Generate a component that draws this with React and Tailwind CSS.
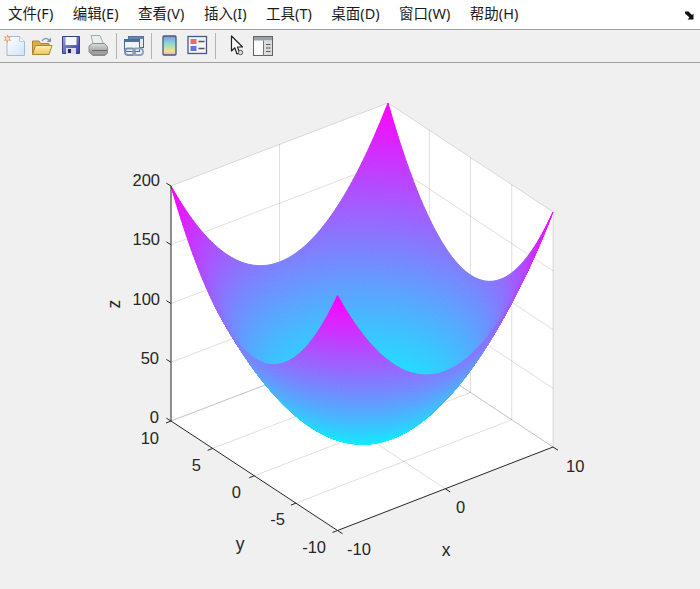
import React from 'react';

const MENUS = ['文件(F)', '编辑(E)', '查看(V)', '插入(I)', '工具(T)', '桌面(D)', '窗口(W)', '帮助(H)'];

// base corners of the axes box on screen, u runs along x, v along y
const A = [171, 421]; // x=-10 y=10
const B = [337.5, 530.5]; // x=-10 y=-10
const C = [553, 447]; // x=10 y=-10
const D = [388, 338]; // x=10 y=10
const Z_SCALE = 235 / 200;

const project = (x, y, z = 0) => {
  const u = (x + 10) / 20;
  const v = (y + 10) / 20;
  const px = (1 - u) * (1 - v) * B[0] + u * (1 - v) * C[0] + u * v * D[0] + (1 - u) * v * A[0];
  const py = (1 - u) * (1 - v) * B[1] + u * (1 - v) * C[1] + u * v * D[1] + (1 - u) * v * A[1];
  return [px, py - z * Z_SCALE];
};

const pts = (list) => list.map((p) => `${p[0].toFixed(2)},${p[1].toFixed(2)}`).join(' ');

// z = x^2 + y^2 drawn from the far corner to the near one
const buildSurface = (n) => {
  const faces = [];
  const step = 20 / n;
  for (let i = n - 1; i >= 0; i--) {
    for (let j = n - 1; j >= 0; j--) {
      const x0 = -10 + i * step;
      const y0 = -10 + j * step;
      const x1 = x0 + step;
      const y1 = y0 + step;
      const f = (x, y) => project(x, y, x * x + y * y);
      const xm = (x0 + x1) / 2;
      const ym = (y0 + y1) / 2;
      const t = Math.min(1, (xm * xm + ym * ym) / 200);
      const color = `rgb(${Math.round(t * 255)},${Math.round((1 - t) * 255)},255)`;
      faces.push({ key: `${i}-${j}`, points: pts([f(x0, y0), f(x1, y0), f(x1, y1), f(x0, y1)]), color });
    }
  }
  return faces;
};

const Seg = ({ a, b, className }) => (
  <line x1={a[0]} y1={a[1]} x2={b[0]} y2={b[1]} className={className} />
);

const GRID = 'stroke-[#262626] [stroke-opacity:0.15] [stroke-width:1]';
const AXIS = 'stroke-[#262626] [stroke-width:1]';

const Label = ({ x, y, anchor = 'middle', big = false, children }) => (
  <text
    x={x}
    y={y}
    textAnchor={anchor}
    dominantBaseline="central"
    className={`fill-[#262626] [font-family:'Liberation_Sans',Arial,sans-serif] ${big ? 'text-[17.5px]' : 'text-[16.5px]'}`}
  >
    {children}
  </text>
);

const Plot = () => {
  const faces = buildSurface(100);
  const zs = [50, 100, 150, 200];
  return (
    <svg viewBox="0 63 700 526" className="block w-[700px] h-[526px]">
      <polygon
        points={pts([project(-10, 10, 200), project(10, 10, 200), project(10, -10, 200), project(10, -10), project(-10, -10), project(-10, 10)])}
        className="fill-white"
      />

      {/* walls and floor grid */}
      {zs.map((z) => (
        <g key={z}>
          <Seg a={project(-10, 10, z)} b={project(10, 10, z)} className={GRID} />
          <Seg a={project(10, 10, z)} b={project(10, -10, z)} className={GRID} />
        </g>
      ))}
      <Seg a={project(0, 10, 0)} b={project(0, 10, 200)} className={GRID} />
      <Seg a={project(10, 10, 0)} b={project(10, 10, 200)} className={GRID} />
      <Seg a={project(10, -10, 0)} b={project(10, -10, 200)} className={GRID} />
      {[5, 0, -5].map((y) => (
        <g key={y}>
          <Seg a={project(10, y, 0)} b={project(10, y, 200)} className={GRID} />
          <Seg a={project(-10, y, 0)} b={project(10, y, 0)} className={GRID} />
        </g>
      ))}
      <Seg a={project(0, 10, 0)} b={project(0, -10, 0)} className={GRID} />
      <Seg a={project(-10, 10, 0)} b={project(10, 10, 0)} className={GRID} />
      <Seg a={project(10, 10, 0)} b={project(10, -10, 0)} className={GRID} />
      <Seg a={project(-10, 10, 0)} b={project(10, 10, 0)} className={GRID} />
      <Seg a={project(10, 10, 0)} b={project(10, -10, 0)} className={GRID} />

      {/* surface */}
      {faces.map((f) => (
        <polygon key={f.key} points={f.points} fill={f.color} stroke={f.color} strokeWidth="1" strokeLinejoin="round" />
      ))}

      {/* axes and ticks */}
      <Seg a={project(-10, 10, 0)} b={project(-10, 10, 200)} className={AXIS} />
      <Seg a={project(-10, 10, 0)} b={project(-10, -10, 0)} className={AXIS} />
      <Seg a={project(-10, -10, 0)} b={project(10, -10, 0)} className={AXIS} />
      {[0, 50, 100, 150, 200].map((z) => {
        const p = project(-10, 10, z);
        return <Seg key={z} a={p} b={[p[0] - 4.6, p[1] - 2.8]} className={AXIS} />;
      })}
      {[10, 5, 0, -5, -10].map((y) => {
        const p = project(-10, y, 0);
        return <Seg key={y} a={p} b={[p[0] - 5, p[1] + 2]} className={AXIS} />;
      })}
      {[-10, 0, 10].map((x) => {
        const p = project(x, -10, 0);
        return <Seg key={x} a={p} b={[p[0] + 5, p[1] + 3.2]} className={AXIS} />;
      })}

      <Label x={160} y={180} anchor="end">200</Label>
      <Label x={160} y={239} anchor="end">150</Label>
      <Label x={160} y={299} anchor="end">100</Label>
      <Label x={159} y={358} anchor="end">50</Label>
      <Label x={159} y={417} anchor="end">0</Label>
      <Label x={159} y={438} anchor="end">10</Label>
      <Label x={201} y={465} anchor="end">5</Label>
      <Label x={241} y={492} anchor="end">0</Label>
      <Label x={285} y={519} anchor="end">-5</Label>
      <Label x={326} y={547} anchor="end">-10</Label>
      <Label x={347} y={549} anchor="start">-10</Label>
      <Label x={456} y={507} anchor="start">0</Label>
      <Label x={566} y={466} anchor="start">10</Label>
      <Label x={446} y={550} big>x</Label>
      <Label x={240} y={544} big>y</Label>
      <g transform="rotate(-90 115 304)">
        <Label x={115} y={303} big>z</Label>
      </g>
    </svg>
  );
};

const NewIcon = () => (
  <svg viewBox="0 0 24 24" className="w-6 h-6">
    <defs>
      <linearGradient id="pg" x1="0" y1="0" x2="1" y2="1">
        <stop offset="0" stopColor="#ffffff" />
        <stop offset="1" stopColor="#cfe3f7" />
      </linearGradient>
    </defs>
    <path d="M4 2.500H16.500L21.500 7.500V21.500H4Z" fill="url(#pg)" stroke="#a5bad3" />
    <path d="M16.500 2.500V7.500H21.500" fill="#eef5fc" stroke="#b9cade" />
    <path d="M4.500 0l1 3 3-1-2 2.500 2 2.500-3-.8-1 3-1-3-3 .8 2-2.500-2-2.500 3 1z" fill="#ee9a63" />
    <circle cx="4.500" cy="4.500" r="1.700" fill="#fcdcae" />
  </svg>
);

const OpenIcon = () => (
  <svg viewBox="0 0 24 24" className="w-6 h-6">
    <defs>
      <linearGradient id="fg" x1="0" y1="0" x2="0" y2="1">
        <stop offset="0" stopColor="#fff3b4" />
        <stop offset="1" stopColor="#ecc35c" />
      </linearGradient>
    </defs>
    <path d="M1.500 7V20.500H18V9.500H9.500L8 7Z" fill="#dcae48" stroke="#ab8532" />
    <path d="M1.500 20.500L4.500 11.500H21L18 20.500Z" fill="url(#fg)" stroke="#ab8532" />
    <path d="M11 7C12.500 4 16 3.500 18 6" fill="none" stroke="#8ea2b5" strokeWidth="1.500" />
    <path d="M20 3.500V8H15.500Z" fill="#8095a9" />
  </svg>
);

const SaveIcon = () => (
  <svg viewBox="0 0 24 24" className="w-6 h-6">
    <defs>
      <linearGradient id="sg" x1="0" y1="0" x2="1" y2="1">
        <stop offset="0" stopColor="#9aa0e6" />
        <stop offset="1" stopColor="#353b9c" />
      </linearGradient>
    </defs>
    <path d="M3.500 2.500H20.500V19.500H3.500Z" fill="url(#sg)" stroke="#3a3e84" />
    <rect x="6.500" y="3" width="11" height="8" fill="#f6f7fc" />
    <rect x="7" y="14" width="10" height="6" fill="#d9dbe9" />
    <rect x="9" y="15" width="3" height="4" fill="#23264f" />
  </svg>
);

const PrintIcon = () => (
  <svg viewBox="0 0 24 24" className="w-6 h-6">
    <defs>
      <linearGradient id="prg" x1="0" y1="0" x2="0" y2="1">
        <stop offset="0" stopColor="#dcdcdc" />
        <stop offset="1" stopColor="#858585" />
      </linearGradient>
    </defs>
    <path d="M6 10L4 1.500H13L16.500 10Z" fill="#e9eef1" stroke="#a3aaaf" />
    <path d="M2 12L5.500 9.500H17.500L20.500 13V19L18 21.500H6L2 18Z" fill="url(#prg)" stroke="#8b8d8f" />
    <path d="M5 16.500H20" stroke="#666" />
    <path d="M6 19.500H18" stroke="#a8a8a8" />
  </svg>
);

const LinkIcon = () => (
  <svg viewBox="0 0 24 24" className="w-6 h-6">
    <rect x="6.500" y="2.500" width="15" height="11" fill="#e3eaf2" stroke="#4a6589" />
    <rect x="6.500" y="2.500" width="15" height="2.500" fill="#6485ac" />
    <rect x="2.500" y="5.500" width="15" height="12" fill="#f0f3f8" stroke="#4a6589" />
    <rect x="2.500" y="5.500" width="15" height="2.500" fill="#4f729d" />
    <rect x="3" y="14.500" width="10" height="6.500" rx="3" fill="none" stroke="#7891b0" strokeWidth="1.800" />
    <rect x="11" y="14.500" width="10" height="6.500" rx="3" fill="none" stroke="#8ba1bc" strokeWidth="1.800" />
  </svg>
);

const ColorbarIcon = () => (
  <svg viewBox="0 0 24 24" className="w-6 h-6">
    <defs>
      <linearGradient id="cb" x1="0" y1="0" x2="0" y2="1">
        <stop offset="0" stopColor="#8795e0" />
        <stop offset="0.35" stopColor="#86d4d8" />
        <stop offset="0.6" stopColor="#bce2a8" />
        <stop offset="0.8" stopColor="#f0e098" />
        <stop offset="1" stopColor="#f0a8b4" />
      </linearGradient>
    </defs>
    <rect x="6" y="2" width="13" height="19" rx="1" fill="url(#cb)" stroke="#445a7e" strokeWidth="1.300" />
  </svg>
);

const LegendIcon = () => (
  <svg viewBox="0 0 24 24" className="w-6 h-6">
    <rect x="3" y="2.500" width="18.500" height="17" fill="#f2f4f8" stroke="#445a7e" strokeWidth="1.300" />
    <rect x="5.500" y="5" width="6" height="5" fill="#ec6a6a" />
    <rect x="5.500" y="12" width="6" height="5" fill="#6a72e4" />
    <path d="M13.500 7.500H19.500M13.500 14.500H19.500" stroke="#555" strokeWidth="1.300" />
  </svg>
);

const PointerIcon = () => (
  <svg viewBox="0 0 24 24" className="w-6 h-6">
    <path d="M7.500 2V17L10.800 13.800L13 20L15.500 19L13.500 13H18.500Z" fill="#fff" stroke="#222" strokeWidth="1.200" strokeLinejoin="round" />
    <circle cx="16.500" cy="18.500" r="2.200" fill="#ddd" stroke="#555" />
  </svg>
);

const PanelIcon = () => (
  <svg viewBox="0 0 24 24" className="w-6 h-6">
    <rect x="2.500" y="2.500" width="19" height="19" fill="#fff" stroke="#5f656b" />
    <rect x="3" y="3" width="18" height="3.500" fill="#99a1a8" />
    <rect x="13" y="7" width="8" height="14" fill="#d9dbdd" />
    <path d="M12.500 6.500V21.500" stroke="#727880" />
    <path d="M15 10.500H19.500M15 14H19.500M15 17.500H19.500" stroke="#5a5a5a" strokeWidth="1.200" />
  </svg>
);

const ToolBtn = ({ children, className = '' }) => (
  <div className={`flex items-center justify-center w-[28px] h-full ${className}`}>{children}</div>
);

const Sep = () => <div className="w-px h-[26px] bg-[#b4b4b4]" />;

const App = () => (
  <div className="flex flex-col w-[700px] h-[589px] bg-[#f0f0f0] overflow-hidden">
    {/* menu bar */}
    <div className="flex items-center justify-between h-[30px] bg-white border-b border-[#a0a0a0] pl-[8px] pr-[5px] pb-px">
      <div className="flex gap-[19.5px] text-[14.5px] text-[#1a1a1a] [font-family:'Noto_Sans','Noto_Sans_CJK_SC',sans-serif]">
        {MENUS.map((m) => (
          <span key={m}>{m}</span>
        ))}
      </div>
      <svg viewBox="0 0 10 9" className="w-[10px] h-[9px] mt-[2px]">
        <path d="M0 0.500H3.500L7 4L8.500 2.500V8.500H2.500L4.500 6.500L0 2.500Z" fill="#111" />
      </svg>
    </div>

    {/* toolbar */}
    <div className="flex items-center h-[33px] bg-[#f0f0f0] border-b border-[#a0a0a0] pl-px">
      <ToolBtn><NewIcon /></ToolBtn>
      <ToolBtn><OpenIcon /></ToolBtn>
      <ToolBtn><SaveIcon /></ToolBtn>
      <ToolBtn className="mr-[3px]"><PrintIcon /></ToolBtn>
      <Sep />
      <ToolBtn className="mx-[3px]"><LinkIcon /></ToolBtn>
      <Sep />
      <ToolBtn className="ml-[3px]"><ColorbarIcon /></ToolBtn>
      <ToolBtn className="mr-[4px]"><LegendIcon /></ToolBtn>
      <Sep />
      <ToolBtn className="ml-[6px]"><PointerIcon /></ToolBtn>
      <ToolBtn className="-ml-px"><PanelIcon /></ToolBtn>
    </div>

    <div className="flex-1">
      <Plot />
    </div>
  </div>
);

export default App;
